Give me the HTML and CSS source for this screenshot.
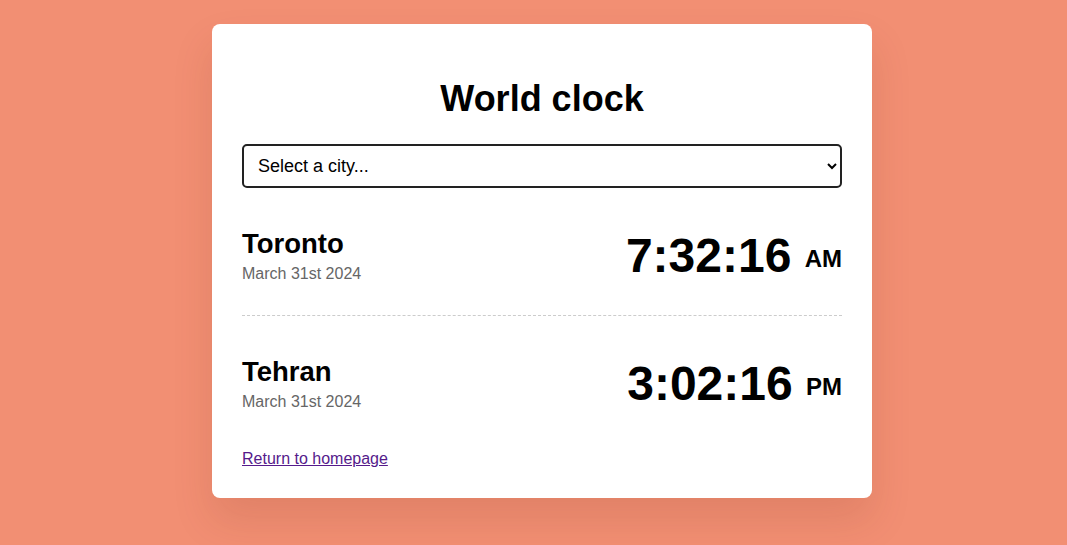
FILE: index.html
```html
<!DOCTYPE html>
<html lang="en">
<head>
<meta charset="utf-8">
<title>World clock</title>
<link rel="stylesheet" href="styles.css">
</head>
<body>
<div class="page">
  <main class="card">
    <h1 class="title">World clock</h1>
    <select class="city-select">
      <option>Select a city...</option>
      <option>Toronto</option>
      <option>Tehran</option>
    </select>
    <div class="cities">
      <div class="city">
        <div class="city-info">
          <h2 class="city-name">Toronto</h2>
          <div class="city-date">March 31st 2024</div>
        </div>
        <div class="city-time">7:32:16 <small class="ampm">AM</small></div>
      </div>
      <div class="city">
        <div class="city-info">
          <h2 class="city-name">Tehran</h2>
          <div class="city-date">March 31st 2024</div>
        </div>
        <div class="city-time">3:02:16 <small class="ampm">PM</small></div>
      </div>
    </div>
    <a class="home-link" href="#">Return to homepage</a>
  </main>
</div>
</body>
</html>
```

FILE: styles.css
```css
html, body {
  margin: 0;
  padding: 0;
}
body {
  background: #f28f73;
  font-family: "Liberation Sans", Arial, sans-serif;
  color: #000;
  min-height: 545px;
}
.page {
  padding: 24px 0 0 17px;
}
.card {
  display: block;
  width: 600px;
  margin: 0 auto;
  padding: 30px;
  background: #fff;
  border-radius: 8px;
  box-shadow: 0 22px 40px rgba(110, 40, 20, 0.13);
}
.title {
  font-size: 36px;
  font-weight: bold;
  text-align: center;
  margin: 24px 0 24px;
  line-height: normal;
}
.city-select {
  display: block;
  width: 100%;
  height: 44px;
  box-sizing: border-box;
  font-family: "Liberation Sans", Arial, sans-serif;
  font-size: 18px;
  color: #000;
  padding: 0 10px;
  border: 2px solid #222;
  border-radius: 5px;
  background: #fff;
}
.city {
  display: flex;
  justify-content: space-between;
  align-items: center;
  padding: 40px 0 32px;
}
.city + .city {
  border-top: 1px dashed #ccc;
}
.city-name {
  margin: 0 0 5px;
  font-size: 27.5px;
  font-weight: bold;
  line-height: normal;
}
.city-date {
  font-size: 16px;
  color: #666;
}
.city-time {
  font-size: 48px;
  font-weight: bold;
  line-height: normal;
}
.ampm {
  font-size: 24px;
  vertical-align: middle;
}
.home-link {
  display: inline-block;
  margin-top: 7px;
  font-size: 16px;
  color: #551a8b;
}
```
